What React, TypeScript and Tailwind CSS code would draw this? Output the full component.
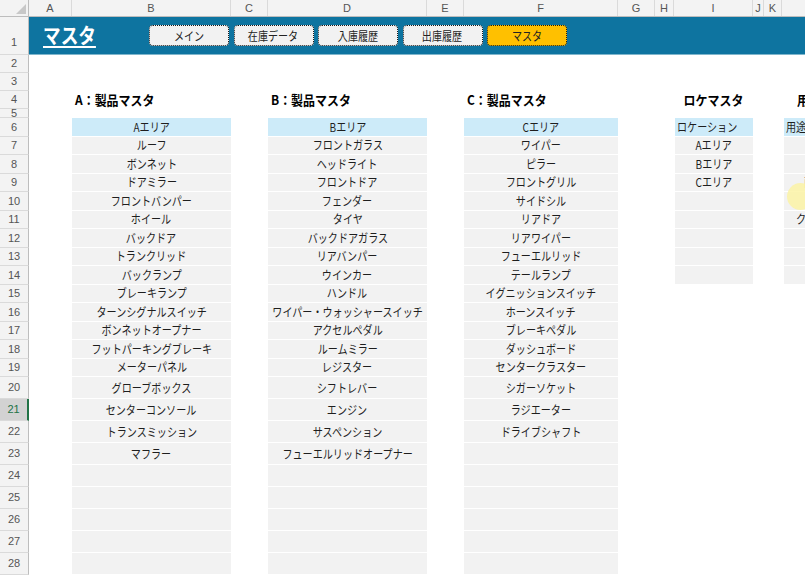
import React from "react";

// column layout of the sheet (px widths, as in the Excel grid)
const cols = [
    { k: "A", w: "w-[43px]" },
    { k: "B", w: "w-[159px]" },
    { k: "C", w: "w-[37px]" },
    { k: "D", w: "w-[159px]" },
    { k: "E", w: "w-[37px]" },
    { k: "F", w: "w-[154px]" },
    { k: "G", w: "w-[37px]" },
    { k: "H", w: "w-[19px]" },
    { k: "I", w: "w-[79px]" },
    { k: "J", w: "w-[11px]" },
    { k: "K", w: "w-[18px]" },
    { k: "L", w: "w-[100px]" },
];

const rowHeights: Record<number, string> = {
    2: "h-[18px]",
    3: "h-[18px]",
    4: "h-[18px]",
    5: "h-[9px]",
};
const rowH = (r: number) =>
    rowHeights[r] ?? (r <= 19 ? "h-[18.5px]" : "h-[22px]");

const masterA = [
    "Aエリア", "ルーフ", "ボンネット", "ドアミラー", "フロントバンパー", "ホイール",
    "バックドア", "トランクリッド", "バックランプ", "ブレーキランプ", "ターンシグナルスイッチ",
    "ボンネットオープナー", "フットパーキングブレーキ", "メーターパネル", "グローブボックス",
    "センターコンソール", "トランスミッション", "マフラー",
];
const masterB = [
    "Bエリア", "フロントガラス", "ヘッドライト", "フロントドア", "フェンダー", "タイヤ",
    "バックドアガラス", "リアバンパー", "ウインカー", "ハンドル", "ワイパー・ウォッシャースイッチ",
    "アクセルペダル", "ルームミラー", "レジスター", "シフトレバー", "エンジン", "サスペンション",
    "フューエルリッドオープナー",
];
const masterC = [
    "Cエリア", "ワイパー", "ピラー", "フロントグリル", "サイドシル", "リアドア", "リアワイパー",
    "フューエルリッド", "テールランプ", "イグニッションスイッチ", "ホーンスイッチ", "ブレーキペダル",
    "ダッシュボード", "センタークラスター", "シガーソケット", "ラジエーター", "ドライブシャフト",
];
const loc = ["ロケーション", "Aエリア", "Bエリア", "Cエリア"];
const purpose: Record<number, string> = { 6: "用途", 9: "商品", 11: "クレーム" };

const titles: Record<string, string> = {
    B: "A：製品マスタ",
    D: "B：製品マスタ",
    F: "C：製品マスタ",
    I: "ロケマスタ",
    L: "用途マスタ",
};

const navButtons = ["メイン", "在庫データ", "入庫履歴", "出庫履歴", "マスタ"];

const Txt = ({ children, left }: { children: React.ReactNode; left?: boolean }) => (
    <span
        className={`inline-block shrink-0 whitespace-nowrap scale-x-[0.84] ${left ? "origin-left" : ""}`}
    >
        {children}
    </span>
);

const RowHeader = ({ r }: { r: number }) => {
    const active = r === 21;
    return (
        <div
            className={`w-[29px] shrink-0 flex justify-center overflow-hidden border-b border-[#dadada] text-[11px] font-['Liberation_Sans',sans-serif] ${
                r === 1 ? "items-end pb-[4px]" : "items-center"
            } ${
                active
                    ? "bg-[#d2d2d2] text-[#217346] border-r-2 border-r-[#217346]"
                    : "bg-[#f3f3f3] text-[#555] border-r border-r-[#bdbdbd]"
            }`}
        >
            {r}
        </div>
    );
};

const DataCell = ({ r, k }: { r: number; k: string }) => {
    const lists: Record<string, string[]> = { B: masterA, D: masterB, F: masterC };
    if (r === 4 && titles[k]) {
        return (
            <div
                className={`flex items-center h-full text-[13px] font-bold text-black whitespace-nowrap ${
                    k === "I" ? "justify-center" : k === "L" ? "pl-[15px]" : "pl-[3px]"
                }`}
            >
                <span className={`inline-block scale-x-[0.92] ${k === "I" ? "" : "origin-left"}`}>
                    {titles[k]}
                </span>
            </div>
        );
    }
    if (r < 6) return null;
    const head = r === 6;
    const fill = head ? "bg-[#cdebf9]" : "bg-[#f2f2f2]";
    if (lists[k]) {
        const text = lists[k][r - 6] ?? "";
        return (
            <div className={`h-full flex items-center justify-center border-b border-white ${fill}`}>
                <Txt>{text}</Txt>
            </div>
        );
    }
    if (k === "I" && r <= 14) {
        const text = loc[r - 6] ?? "";
        return (
            <div
                className={`h-full flex items-center border-b border-white ml-[1px] ${fill} ${
                    head ? "justify-start pl-[2px]" : "justify-center"
                }`}
            >
                <Txt left={head}>{text}</Txt>
            </div>
        );
    }
    if (k === "L" && r <= 14) {
        const text = purpose[r] ?? "";
        const pad = r === 6 ? "pl-[2px]" : r === 9 ? "pl-[20px]" : "pl-[12px]";
        return (
            <div className={`h-full flex items-center border-b border-white ml-[2px] ${fill} ${pad}`}>
                <Txt left>{text}</Txt>
            </div>
        );
    }
    return null;
};

const SheetRow = ({ r }: { r: number }) => (
    <div className={`flex ${rowH(r)}`}>
        <RowHeader r={r} />
        {cols.map((c) => (
            <div key={c.k} className={`${c.w} shrink-0 h-full overflow-visible`}>
                <DataCell r={r} k={c.k} />
            </div>
        ))}
    </div>
);

export default function App() {
    const rows = Array.from({ length: 27 }, (_, i) => i + 2);
    return (
        <div className="relative w-[805px] h-[575px] overflow-hidden bg-white text-[12px] text-[#1e1e1e] font-['Noto_Sans_CJK_JP','Noto_Sans',sans-serif]">
            {/* column letters */}
            <div className="flex h-[17px] border-b border-[#bdbdbd] bg-[#f3f3f3]">
                <div className="w-[29px] shrink-0 border-r border-[#bdbdbd] flex items-end justify-end p-[2px]">
                    <svg width="10" height="10" viewBox="0 0 10 10">
                        <path d="M10 0 L10 10 L0 10 Z" fill="#c8c8c8" />
                    </svg>
                </div>
                {cols.map((c) => (
                    <div
                        key={c.k}
                        className={`${c.w} shrink-0 border-r border-[#dadada] flex items-center justify-center text-[11px] text-[#555] font-['Liberation_Sans',sans-serif]`}
                    >
                        {c.k}
                    </div>
                ))}
            </div>

            {/* row 1 : navigation band */}
            <div className="flex h-[38px]">
                <RowHeader r={1} />
                <div className="flex-1 flex items-center bg-[#0e74a0] border-b border-[#7fb6cc]">
                    <div className="w-[120px] pl-[14px] shrink-0">
                        <span className="inline-block origin-left scale-x-[0.84] text-[21px] font-bold text-white underline underline-offset-[3px] decoration-2 leading-none">
                            マスタ
                        </span>
                    </div>
                    <div className="flex gap-[4.5px]">
                        {navButtons.map((b) => (
                            <div
                                key={b}
                                className={`w-[80px] h-[21px] flex items-center justify-center rounded-[4px] border border-dotted border-[#1a1a1a] text-[12px] text-[#222] ${
                                    b === "マスタ" ? "bg-[#ffc000]" : "bg-[#f2f2f2]"
                                }`}
                            >
                                <Txt>{b}</Txt>
                            </div>
                        ))}
                    </div>
                </div>
            </div>

            {rows.map((r) => (
                <SheetRow key={r} r={r} />
            ))}

            {/* cursor highlight */}
            <div className="absolute left-[787px] top-[183px] w-[27px] h-[27px] rounded-full bg-[#fbf2a0]/80" />
        </div>
    );
}
